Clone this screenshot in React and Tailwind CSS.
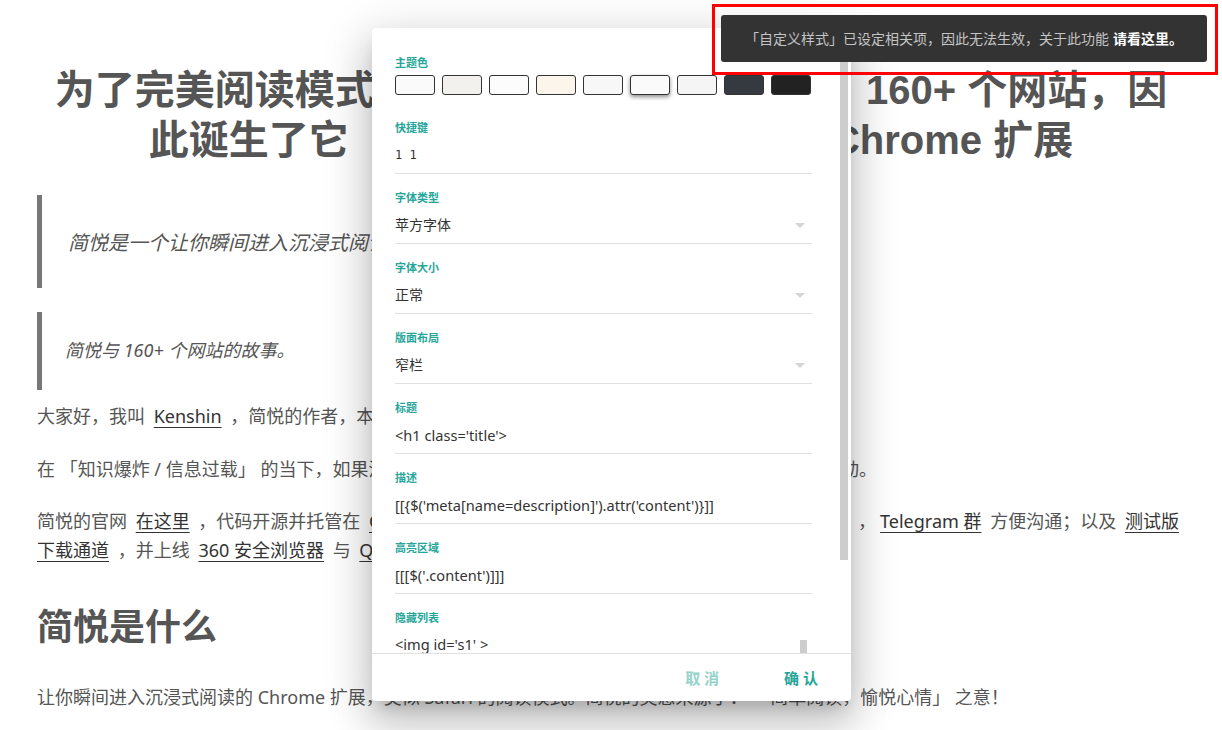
import React from "react";

const swatches = ["#fafafa", "#f2f1ed", "#fcfcfc", "#fcf5ec", "#f7f7f7", "#fafafa", "#f5f5f5", "#343a40", "#222222"];

const fields = [
    {label: "快捷键", value: "1 1", mono: true},
    {label: "字体类型", value: "苹方字体", select: true},
    {label: "字体大小", value: "正常", select: true},
    {label: "版面布局", value: "窄栏", select: true},
    {label: "标题", value: "<h1 class='title'>", code: true},
    {label: "描述", value: "[[{$('meta[name=description]').attr('content')}]]", code: true},
    {label: "高亮区域", value: "[[[$('.content')]]]", code: true},
];

const Link = ({children, className = "mx-[4px]"}) => (
    <a className={`${className} text-[#333] underline decoration-[#333] underline-offset-[4px]`}>{children}</a>
);

const Field = ({label, value, select, mono, code, first}) => (
    <div className={first ? "mt-[25px]" : "mt-[16px]"}>
        <div className="text-[11px] leading-[16px] font-bold text-[#26a69a]">{label}</div>
        <div className="mt-[9px] pb-[8px] border-b border-[#e0e0e0] flex items-center justify-between">
            <span
                className={`leading-[20px] text-[#333] ${mono ? "text-[12px] font-['DejaVu_Sans_Mono',monospace]" : code ? "text-[14.6px]" : "text-[14px]"}`}>
                {value}
            </span>
            {select && (
                <span className="mr-[7px] w-0 h-0 border-x-[5px] border-x-transparent border-t-[5px] border-t-[#d6d6d6]"/>
            )}
        </div>
    </div>
);

const SettingsDialog = () => (
    <div
        className="absolute left-[372px] top-[28px] w-[479px] h-[673px] bg-white rounded-[4px] flex flex-col overflow-hidden shadow-[0_11px_15px_-7px_rgba(0,0,0,0.2),0_24px_38px_3px_rgba(0,0,0,0.14),0_9px_46px_8px_rgba(0,0,0,0.12)] font-['Noto_Sans','Noto_Sans_CJK_SC',sans-serif]">
        <div className="flex-1 flex overflow-hidden">
            <div className="w-[440px] pl-[23px] pt-[27px]">
                <div className="text-[11px] leading-[16px] font-bold text-[#26a69a]">主题色</div>
                <div className="mt-[4px] flex gap-[7px]">
                    {swatches.map((c, i) => (
                        <div
                            key={i}
                            className={`w-[40px] h-[20px] rounded-[3px] border border-[#333] ${i === 5 ? "shadow-[0_2px_4px_rgba(0,0,0,0.45)]" : ""}`}
                            style={{backgroundColor: c}}
                        />
                    ))}
                </div>
                {fields.map((f, i) => (
                    <Field key={f.label} {...f} first={i === 0}/>
                ))}
                <div className="mt-[16px]">
                    <div className="text-[11px] leading-[16px] font-bold text-[#26a69a]">隐藏列表</div>
                    <div className="mt-[8px] flex justify-between">
                        <span className="text-[14.6px] leading-[20px] text-[#333]">{"<img id='s1' >"}</span>
                        <span className="mr-[5px] mt-[6px] w-[7px] h-[30px] bg-[#cdcdcd]"/>
                    </div>
                </div>
            </div>
            <div className="flex-1"/>
            <div className="mr-[3px] w-[8px] h-[532px] bg-[#cdcdcd]"/>
        </div>
        <div className="h-[48px] border-t border-[#e0e0e0] flex items-center justify-end gap-[65px] pr-[33px] pt-[2px]">
            <button className="text-[15px] font-bold text-[#93d3cb]">取 消</button>
            <button className="text-[15px] font-bold text-[#26a69a]">确 认</button>
        </div>
    </div>
);

const Toast = () => (
    <div className="absolute left-[712px] top-[4px] w-[506px] h-[71px] border-[3px] border-[#ff0000] pl-[6px] pt-[8px]">
        <div
            className="w-[486px] h-[47px] bg-[#333] rounded-[3px] flex items-center justify-center text-[14px] text-[#c4c4c4] font-['Noto_Sans','Noto_Sans_CJK_SC',sans-serif]">
            「自定义样式」已设定相关项，因此无法生效，关于此功能 <span className="ml-[4px] text-white font-bold">请看这里。</span>
        </div>
    </div>
);

export default function App() {
    return (
        <div className="relative w-[1222px] h-[730px] overflow-hidden bg-white font-['Noto_Sans','Noto_Sans_CJK_SC',sans-serif] text-[#555]">
            <div className="px-[37px]">
                <h1 className="mt-[65px] text-[40px] leading-[50px] font-bold text-center whitespace-nowrap font-['Liberation_Sans','Noto_Sans_CJK_SC',sans-serif]">
                    为了完美阅读模式，我花了近两年时间适配了 160+ 个网站，因<br/>此诞生了它 「简悦」，一款沉浸式阅读 Chrome 扩展
                </h1>

                <blockquote className="mt-[30px] border-l-[5px] border-[#777] pl-[26px] pt-[34px] pb-[31px] text-[20px] leading-[28px] italic">
                    简悦是一个让你瞬间进入沉浸式阅读的 Chrome 扩展，还原阅读的本质。
                </blockquote>
                <blockquote className="mt-[24px] border-l-[5px] border-[#777] pl-[23px] pt-[26px] pb-[27px] text-[18px] leading-[25px] italic">
                    简悦与 160+ 个网站的故事。
                </blockquote>

                <p className="mt-[12px] text-[18px] leading-[29px]">
                    大家好，我叫 <Link>Kenshin</Link> ，简悦的作者，本文讲述了简悦的诞生过程。
                </p>
                <p className="mt-[24px] text-[18px] leading-[29px]">
                    在 「知识爆炸 / 信息过载」 的当下，如果没有一个良好的阅读环境 ，那么我们的阅读将会变得十分被动。
                </p>
                <p className="mt-[23px] text-[18px] leading-[29px] whitespace-nowrap">
                    简悦的官网 <Link>在这里</Link> ，代码开源并托管在 <Link>Github</Link> ，欢迎 Star 与 Fork；同时建立了 <Link>QQ 群</Link> 与 <Link>微信群</Link> ，<Link>Telegram 群</Link> 方便沟通；以及 <Link className="ml-[4px]">测试版</Link><br/>
                    <Link className="mr-[4px]">下载通道</Link> ，并上线 <Link>360 安全浏览器</Link> 与 <Link>QQ 浏览器</Link> 应用市场。
                </p>

                <h2 className="mt-[39px] text-[36px] leading-[45px] font-bold">简悦是什么</h2>
                <p className="mt-[34px] text-[18px] leading-[29px] whitespace-nowrap">
                    让你瞬间进入沉浸式阅读的 Chrome 扩展，类似 Safari 的阅读模式。简悦的灵感来源于： 「简单阅读，愉悦心情」 之意！
                </p>
            </div>

            <SettingsDialog/>
            <Toast/>
        </div>
    );
}
